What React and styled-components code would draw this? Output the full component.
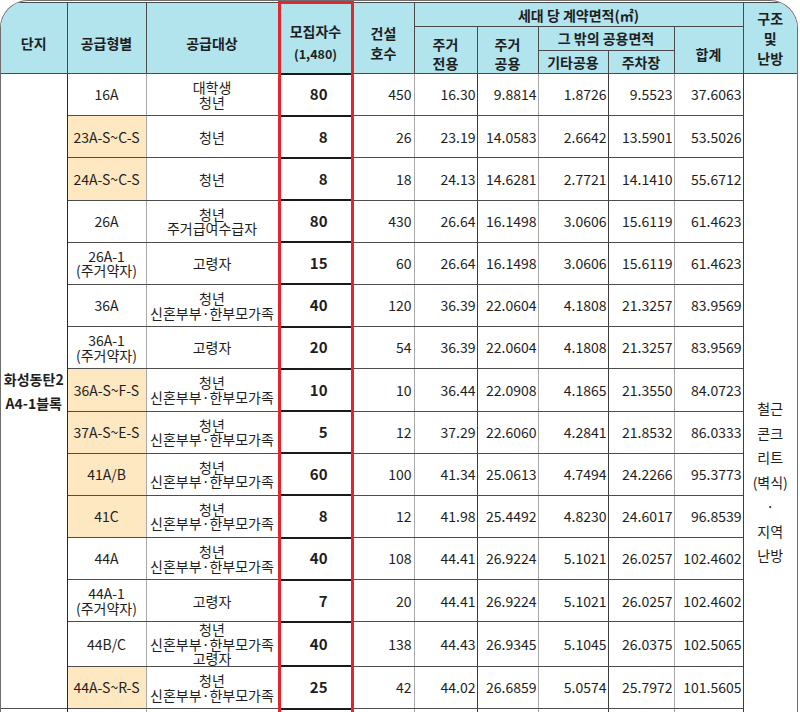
import React from "react";
import styled, { createGlobalStyle, css } from "styled-components";

const GlobalStyle = createGlobalStyle`
  html, body {
    margin: 0;
    padding: 0;
    background: #ffffff;
    overflow: hidden;
  }
  body {
    font-family: "Noto Sans CJK KR", "Noto Sans", sans-serif;
  }
`;

const NEW_FAMILY = ["청년", "신혼부부·한부모가족"];

const rows = [
  { type: "16A", target: ["대학생", "청년"], recruit: 80, built: 450, area: ["16.30", "9.8814", "1.8726", "9.5523", "37.6063"] },
  { type: "23A-S~C-S", special: true, target: ["청년"], recruit: 8, built: 26, area: ["23.19", "14.0583", "2.6642", "13.5901", "53.5026"] },
  { type: "24A-S~C-S", special: true, target: ["청년"], recruit: 8, built: 18, area: ["24.13", "14.6281", "2.7721", "14.1410", "55.6712"] },
  { type: "26A", target: ["청년", "주거급여수급자"], recruit: 80, built: 430, area: ["26.64", "16.1498", "3.0606", "15.6119", "61.4623"] },
  { type: ["26A-1", "(주거약자)"], target: ["고령자"], recruit: 15, built: 60, area: ["26.64", "16.1498", "3.0606", "15.6119", "61.4623"] },
  { type: "36A", target: NEW_FAMILY, recruit: 40, built: 120, area: ["36.39", "22.0604", "4.1808", "21.3257", "83.9569"] },
  { type: ["36A-1", "(주거약자)"], target: ["고령자"], recruit: 20, built: 54, area: ["36.39", "22.0604", "4.1808", "21.3257", "83.9569"] },
  { type: "36A-S~F-S", special: true, target: NEW_FAMILY, recruit: 10, built: 10, area: ["36.44", "22.0908", "4.1865", "21.3550", "84.0723"] },
  { type: "37A-S~E-S", special: true, target: NEW_FAMILY, recruit: 5, built: 12, area: ["37.29", "22.6060", "4.2841", "21.8532", "86.0333"] },
  { type: "41A/B", special: true, target: NEW_FAMILY, recruit: 60, built: 100, area: ["41.34", "25.0613", "4.7494", "24.2266", "95.3773"] },
  { type: "41C", special: true, target: NEW_FAMILY, recruit: 8, built: 12, area: ["41.98", "25.4492", "4.8230", "24.6017", "96.8539"] },
  { type: "44A", target: NEW_FAMILY, recruit: 40, built: 108, area: ["44.41", "26.9224", "5.1021", "26.0257", "102.4602"] },
  { type: ["44A-1", "(주거약자)"], target: ["고령자"], recruit: 7, built: 20, area: ["44.41", "26.9224", "5.1021", "26.0257", "102.4602"] },
  { type: "44B/C", target: ["청년", "신혼부부·한부모가족", "고령자"], recruit: 40, built: 138, area: ["44.43", "26.9345", "5.1045", "26.0375", "102.5065"] },
  { type: "44A-S~R-S", special: true, target: NEW_FAMILY, recruit: 25, built: 42, area: ["44.02", "26.6859", "5.0574", "25.7972", "101.5605"] },
];

// vertical rule colour right of each area column (dark/light alternate)
const areaRules = ["#3c3c3c", "#a9a9a9", "#3c3c3c", "#a9a9a9", "#3c3c3c"];

const Frame = styled.div`
  box-sizing: border-box;
  width: 798px;
  height: 712px;
  border: 1px solid #6e6e6e;
  border-bottom: none;
  border-radius: 28px 28px 0 0;
  overflow: hidden;
`;

const Table = styled.table`
  width: 796px;
  border-collapse: collapse;
  table-layout: fixed;
  color: #1e1e1e;
`;

const redSide = css`
  border-left: 3px solid #e3262b;
  border-right: 3px solid #e3262b;
`;

const Th = styled.th`
  background: #b1e4ed;
  font-size: 14px;
  font-weight: 700;
  line-height: ${(p) => p.$lh || 20}px;
  height: ${(p) => p.$h || 21}px;
  padding: ${(p) => p.$pt || 0}px 0 0;
  border: 1px solid #4a4a4a;
  white-space: nowrap;
  vertical-align: middle;
  ${(p) => p.$red && redSide}
  ${(p) => p.$red && "border-top: 3px solid #e3262b;"}
`;

const Sub = styled.div`
  font-size: 12.5px;
  line-height: 17px;
  margin-top: 4px;
`;

const Td = styled.td`
  height: 40.2px;
  padding: 0 ${(p) => p.$pr || 0}px 0 0;
  font-size: 14px;
  line-height: 14.5px;
  text-align: ${(p) => p.$align || "center"};
  background: ${(p) => p.$bg || "#ffffff"};
  font-weight: ${(p) => (p.$bold ? 700 : 400)};
  border-top: 1px solid #4d4d4d;
  border-bottom: 1px solid #4d4d4d;
  border-left: 1px solid ${(p) => p.$left || "#a9a9a9"};
  border-right: 1px solid ${(p) => p.$right || "#a9a9a9"};
  white-space: nowrap;
  overflow: hidden;
  vertical-align: middle;
`;

const RecruitCell = styled(Td)`
  font-size: 15px;
  border-top: 2px solid #1a1a1a;
  border-bottom: 2px solid #1a1a1a;
  ${redSide}
`;

const SiteCell = styled.td`
  border-left: none;
  border-right: 1px solid #2a2a2a;
  border-top: 1px solid #4d4d4d;
  text-align: center;
  font-size: 14px;
  font-weight: 700;
  line-height: 24px;
  vertical-align: middle;
  padding: 0;
`;

const StructCell = styled.td`
  border-left: 1px solid #3c3c3c;
  border-right: none;
  border-top: 1px solid #4d4d4d;
  text-align: center;
  font-size: 14px;
  line-height: 24.5px;
  vertical-align: top;
  padding: 322px 0 0;
`;

const Lines = ({ value }) => {
  const list = Array.isArray(value) ? value : [value];
  return list.map((line, i) => <div key={i}>{line}</div>);
};

const widths = [66, 79, 133, 73, 62, 63, 61, 70, 66, 69, 54];

const Header = () => (
  <thead>
    <tr>
      <Th rowSpan={3} $pt={10} style={{ borderLeft: "none" }}>단지</Th>
      <Th rowSpan={3} $pt={10}>공급형별</Th>
      <Th rowSpan={3} $pt={10}>공급대상</Th>
      <Th rowSpan={3} $pt={6} $red>
        모집자수
        <Sub>(1,480)</Sub>
      </Th>
      <Th rowSpan={3} $pt={10}>
        건설
        <br />
        호수
      </Th>
      <Th colSpan={5} $h={23}>세대 당 계약면적(㎡)</Th>
      <Th rowSpan={3} style={{ borderRight: "none" }}>
        구조
        <br />및
        <br />
        난방
      </Th>
    </tr>
    <tr>
      <Th rowSpan={2} $pt={8} $lh={19}>
        주거
        <br />
        전용
      </Th>
      <Th rowSpan={2} $pt={8} $lh={19}>
        주거
        <br />
        공용
      </Th>
      <Th colSpan={2} $h={22}>그 밖의 공용면적</Th>
      <Th rowSpan={2} $pt={8}>합계</Th>
    </tr>
    <tr>
      <Th $h={22}>기타공용</Th>
      <Th $h={22}>주차장</Th>
    </tr>
  </thead>
);

const Row = ({ row, first }) => (
  <tr>
    {first && (
      <SiteCell rowSpan={15}>
        화성동탄2
        <br />
        A4-1블록
      </SiteCell>
    )}
    <Td $left="#2a2a2a" $bg={row.special ? "#fde8c2" : undefined}>
      <Lines value={row.type} />
    </Td>
    <Td>
      <Lines value={row.target} />
    </Td>
    <RecruitCell $align="right" $pr={23} $bold>
      {row.recruit}
    </RecruitCell>
    <Td $align="right" $pr={2}>
      {row.built}
    </Td>
    {row.area.map((v, i) => (
      <Td key={i} $align="right" $pr={1} $right={areaRules[i]}>
        {v}
      </Td>
    ))}
    {first && (
      <StructCell rowSpan={16}>
        <Lines value={["철근", "콘크", "리트", "(벽식)", "·", "지역", "난방"]} />
      </StructCell>
    )}
  </tr>
);

export default function App() {
  return (
    <>
      <GlobalStyle />
      <Frame>
        <Table>
          <colgroup>
            {widths.map((w, i) => (
              <col key={i} style={{ width: w }} />
            ))}
          </colgroup>
          <Header />
          <tbody>
            {rows.map((row, i) => (
              <Row key={i} row={row} first={i === 0} />
            ))}
            <tr>
              <SiteCell />
              <Td $left="#2a2a2a" />
              <Td>
                <Lines value={["대학생", "청년"]} />
              </Td>
              <RecruitCell />
              <Td />
              {areaRules.map((c, i) => (
                <Td key={i} $right={c} />
              ))}
            </tr>
          </tbody>
        </Table>
      </Frame>
    </>
  );
}
